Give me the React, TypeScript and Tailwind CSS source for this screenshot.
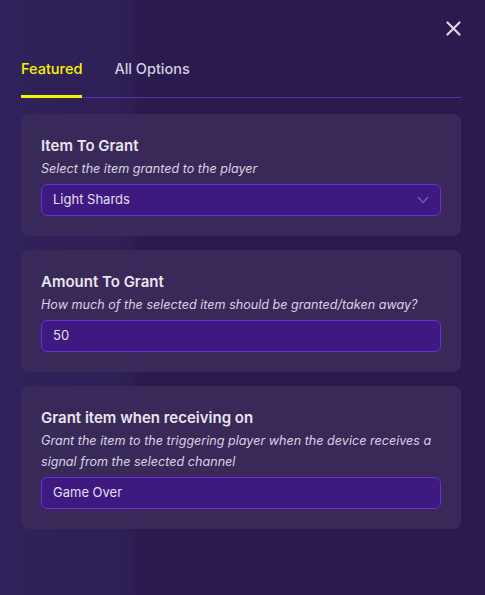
import { useState } from 'react'

const FIELDS = [
  { title: 'Item To Grant', desc: 'Select the item granted to the player', value: 'Light Shards', select: true },
  { title: 'Amount To Grant', desc: 'How much of the selected item should be granted/taken away?', value: '50', select: false },
  {
    title: 'Grant item when receiving on',
    desc: 'Grant the item to the triggering player when the device receives a signal from the selected channel',
    value: 'Game Over',
    select: false,
  },
]

export default function App() {
  const [tab, setTab] = useState('featured')

  return (
    <div
      className="w-[485px] h-[595px] overflow-hidden bg-[linear-gradient(90deg,#30225a_0%,#2e1f55_26%,#2b1a4e_29%,#2b1a4e_100%)] text-[#e6e1ef]"
      style={{ fontFamily: 'Inter, "Noto Sans", sans-serif' }}
    >
      <div className="flex justify-end pt-[21px] pr-[24px]">
        <button className="w-[15px] h-[15px] text-[#dcd7e6]">
          <svg viewBox="0 0 15 15" width="15" height="15" fill="none" stroke="currentColor" strokeWidth="2.2" strokeLinecap="round">
            <path d="M1.5 1.5 L13.5 13.5 M13.5 1.5 L1.5 13.5" />
          </svg>
        </button>
      </div>

      <div className="ml-[21px] mr-[24px] mt-[23px] flex border-b border-[#5a2fb0]">
        <button
          onClick={() => setTab('featured')}
          className={`pb-[16px] text-[14.5px] leading-[20px] font-medium -mb-px border-b-[3px] ${tab === 'featured' ? 'text-[#f5f500] border-[#f5f500]' : 'text-[#d4cfe0] border-transparent'}`}
        >
          Featured
        </button>
        <button
          onClick={() => setTab('all')}
          className={`ml-[32px] pb-[16px] text-[14.5px] leading-[20px] font-medium -mb-px border-b-[3px] ${tab === 'all' ? 'text-[#f5f500] border-[#f5f500]' : 'text-[#d4cfe0] border-transparent'}`}
        >
          All Options
        </button>
      </div>

      <div className="ml-[21px] mr-[24px] mt-[16px] flex flex-col gap-[14px]">
        {FIELDS.map(f => (
          <div key={f.title} className="rounded-[8px] bg-[#3b2a5a]/90 px-[20px] pt-[20px] pb-[20px]">
            <div className="text-[15px] leading-[23px] font-semibold text-[#e8e4f0]">{f.title}</div>
            <div className="mt-[1px] text-[12.6px] leading-[21px] italic text-[#d8d2e4]">{f.desc}</div>
            <div className="mt-[5px] h-[32px] rounded-[6px] border border-[#6530d8] bg-[#3e1a80] px-[11px] flex items-center justify-between">
              <span className="text-[13px] text-[#e4def0]">{f.value}</span>
              {f.select && (
                <svg width="12" height="8" viewBox="0 0 12 8" fill="none" stroke="#7a5bb8" strokeWidth="1.2">
                  <path d="M1 1 L6 6.5 L11 1" />
                </svg>
              )}
            </div>
          </div>
        ))}
      </div>
    </div>
  )
}
